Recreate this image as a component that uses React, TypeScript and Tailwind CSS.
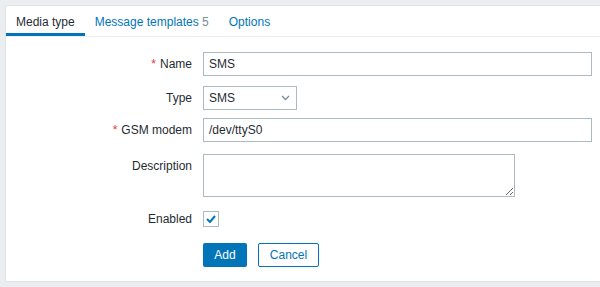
import React from 'react';

const Label: React.FC<{ text: string; required?: boolean }> = ({ text, required }) => (
  <div className="w-[197px] shrink-0 text-right pr-[11px]">
    {required && <span className="text-[#e33734] mr-[4px]">*</span>}
    {text}
  </div>
);

const App: React.FC = () => {
  return (
    <div className="w-[600px] h-[287px] bg-[#ebeef0] pt-[5px] pl-[5px] overflow-hidden text-[12px] text-[#1f2c33] font-['Liberation_Sans',Arial,sans-serif]">
      <div className="h-[277px] bg-white border border-[#dfe4e7] border-r-0">
        {/* Tabs */}
        <div className="flex h-[31px] border-b border-[#ebeef0]">
          <div className="px-[10px] pt-[7px] border-b-[3px] border-[#0275b8] text-[#1f2c33]">Media type</div>
          <div className="px-[10px] pt-[7px] text-[#0275b8]">
            Message templates <span className="text-[#768d99]">5</span>
          </div>
          <div className="px-[10px] pt-[7px] text-[#0275b8]">Options</div>
        </div>

        {/* Form */}
        <div className="flex flex-col pt-[15px]">
          <div className="flex items-center h-[24px]">
            <Label text="Name" required />
            <div className="w-[389px] h-[24px] border border-[#acbbc2] px-[5px] flex items-center">SMS</div>
          </div>

          <div className="flex items-center h-[24px] mt-[10px]">
            <Label text="Type" />
            <div className="w-[94px] h-[24px] border border-[#acbbc2] pl-[5px] pr-[6px] flex items-center justify-between">
              <span>SMS</span>
              <svg width="9" height="6" viewBox="0 0 9 6" fill="none">
                <path d="M1 1l3.5 3.5L8 1" stroke="#768d99" strokeWidth="1.3" />
              </svg>
            </div>
          </div>

          <div className="flex items-center h-[24px] mt-[8px]">
            <Label text="GSM modem" required />
            <div className="w-[389px] h-[24px] border border-[#acbbc2] px-[5px] flex items-center">/dev/ttyS0</div>
          </div>

          <div className="flex items-start mt-[12px]">
            <div className="pt-[3px]">
              <Label text="Description" />
            </div>
            <textarea
              className="w-[312px] h-[43px] border border-[#acbbc2] outline-none block"
              defaultValue=""
            />
          </div>

          <div className="flex items-center h-[16px] mt-[14px]">
            <Label text="Enabled" />
            <div className="w-[16px] h-[16px] border border-[#acbbc2] flex items-center justify-center">
              <svg width="10" height="8" viewBox="0 0 10 8" fill="none">
                <path d="M1 4l3 3L9 1" stroke="#0275b8" strokeWidth="2" />
              </svg>
            </div>
          </div>

          <div className="flex items-center mt-[16px] pl-[197px] gap-[11px]">
            <button className="h-[24px] w-[44px] bg-[#0275b8] text-white rounded-[2px]">Add</button>
            <button className="h-[24px] w-[61px] border border-[#0275b8] text-[#0275b8] bg-white rounded-[2px]">Cancel</button>
          </div>
        </div>
      </div>
    </div>
  );
};

export default App;
